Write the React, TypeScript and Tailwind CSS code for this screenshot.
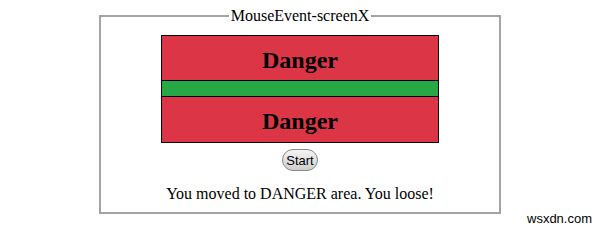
import React from 'react';

export default function App() {
  return (
    <div className="relative w-[600px] h-[230px] bg-white font-['Liberation_Serif',serif] text-black">
      <div className="pt-[7px] pl-[99px]">
        <fieldset className="w-[402px] h-[207px] border-2 border-[#a3a3a3] px-[60px]">
          <legend className="mx-auto px-[2px] text-[16px] leading-[18px]">MouseEvent-screenX</legend>
          <div className="mt-[10px] border border-black">
            <div className="h-[45px] pt-[3px] bg-[#dc3545] flex items-center justify-center border-b border-black">
              <span className="text-[24px] font-bold">Danger</span>
            </div>
            <div className="h-[16px] bg-[#28a745] border-b border-black" />
            <div className="h-[45px] pt-[3px] bg-[#dc3545] flex items-center justify-center">
              <span className="text-[24px] font-bold">Danger</span>
            </div>
          </div>
          <div className="flex justify-center mt-[6px]">
            <button className="h-[22px] px-[3px] rounded-full border border-[#8a8a8a] bg-gradient-to-b from-[#f4f4f4] to-[#cfcfcf] font-['Liberation_Sans',sans-serif] text-[13px] leading-none">
              Start
            </button>
          </div>
          <p className="mt-[14px] text-center text-[16px] leading-[18px]">
            You moved to DANGER area. You loose!
          </p>
        </fieldset>
      </div>
      <span className="absolute left-[527px] top-[209px] font-['Liberation_Sans',sans-serif] text-[13px] text-black">
        wsxdn.com
      </span>
    </div>
  );
}
